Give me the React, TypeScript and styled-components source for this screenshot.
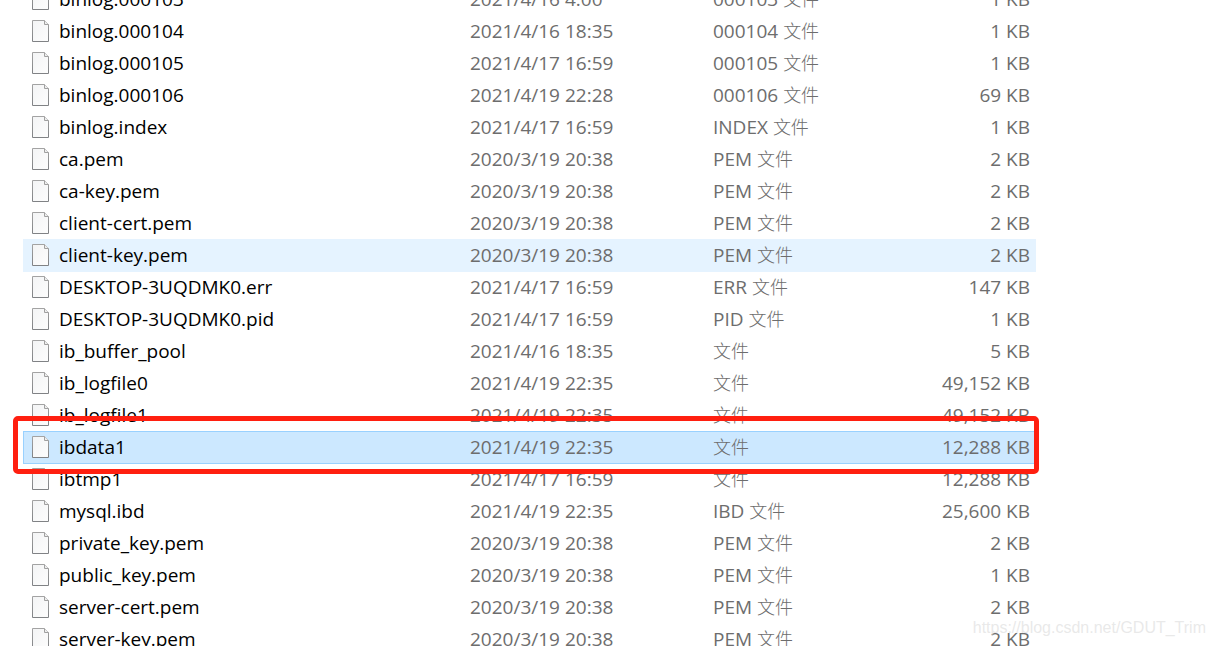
import React from "react";
import styled, { createGlobalStyle, css } from "styled-components";

type RowState = "normal" | "hover" | "selected";

interface FileEntry {
  name: string;
  modified: string;
  ext?: string;
  size: string;
  state?: RowState;
}

const files: FileEntry[] = [
  { name: "binlog.000103", modified: "2021/4/16 4:00", ext: "000103", size: "1 KB" },
  { name: "binlog.000104", modified: "2021/4/16 18:35", ext: "000104", size: "1 KB" },
  { name: "binlog.000105", modified: "2021/4/17 16:59", ext: "000105", size: "1 KB" },
  { name: "binlog.000106", modified: "2021/4/19 22:28", ext: "000106", size: "69 KB" },
  { name: "binlog.index", modified: "2021/4/17 16:59", ext: "INDEX", size: "1 KB" },
  { name: "ca.pem", modified: "2020/3/19 20:38", ext: "PEM", size: "2 KB" },
  { name: "ca-key.pem", modified: "2020/3/19 20:38", ext: "PEM", size: "2 KB" },
  { name: "client-cert.pem", modified: "2020/3/19 20:38", ext: "PEM", size: "2 KB" },
  { name: "client-key.pem", modified: "2020/3/19 20:38", ext: "PEM", size: "2 KB", state: "hover" },
  { name: "DESKTOP-3UQDMK0.err", modified: "2021/4/17 16:59", ext: "ERR", size: "147 KB" },
  { name: "DESKTOP-3UQDMK0.pid", modified: "2021/4/17 16:59", ext: "PID", size: "1 KB" },
  { name: "ib_buffer_pool", modified: "2021/4/16 18:35", size: "5 KB" },
  { name: "ib_logfile0", modified: "2021/4/19 22:35", size: "49,152 KB" },
  { name: "ib_logfile1", modified: "2021/4/19 22:35", size: "49,152 KB" },
  { name: "ibdata1", modified: "2021/4/19 22:35", size: "12,288 KB", state: "selected" },
  { name: "ibtmp1", modified: "2021/4/17 16:59", size: "12,288 KB" },
  { name: "mysql.ibd", modified: "2021/4/19 22:35", ext: "IBD", size: "25,600 KB" },
  { name: "private_key.pem", modified: "2020/3/19 20:38", ext: "PEM", size: "2 KB" },
  { name: "public_key.pem", modified: "2020/3/19 20:38", ext: "PEM", size: "1 KB" },
  { name: "server-cert.pem", modified: "2020/3/19 20:38", ext: "PEM", size: "2 KB" },
  { name: "server-key.pem", modified: "2020/3/19 20:38", ext: "PEM", size: "2 KB" },
];

const GlobalStyle = createGlobalStyle`
  body {
    margin: 0;
    background: #fff;
  }
`;

const Viewport = styled.main`
  position: relative;
  box-sizing: border-box;
  height: 100vh;
  overflow: hidden;
  padding: 0 179px 0 23px;
  background: #fff;
  font-family: "Open Sans", "Noto Sans CJK SC", sans-serif;
  font-size: 19px;
  line-height: 32px;
`;

/* The list is scrolled so that its first row is cut by the top edge. */
const FileTable = styled.table`
  width: 100%;
  margin-top: -17px;
  table-layout: fixed;
  border-collapse: collapse;
  color: #6d6d6d;
`;

const NameCol = styled.col``;
const DateCol = styled.col`
  width: 243px;
`;
const TypeCol = styled.col`
  width: 183px;
`;
const SizeCol = styled.col`
  width: 140px;
`;

const Row = styled.tr<{ $state: RowState }>`
  position: relative;
  height: 32px;
  ${({ $state }) =>
    $state === "hover" &&
    css`
      background: #e5f3ff;
      box-shadow: 0 1px 0 #e5f3ff;
    `}
  ${({ $state }) =>
    $state === "selected" &&
    css`
      z-index: 1;
      background: #cce8ff;
      box-shadow: inset 1px 1px 0 #99d1ff, inset -1px 0 0 #99d1ff, 0 1px 0 #99d1ff;
    `}
`;

const Cell = styled.td`
  height: 32px;
  padding: 0;
  white-space: nowrap;
`;

const NameCell = styled(Cell)`
  color: #000;
`;

const SizeCell = styled(Cell)`
  padding-right: 6px;
  text-align: right;
`;

const NameContent = styled.div`
  display: flex;
  align-items: center;
  gap: 9px;
  padding-left: 8px;
`;

const Hanzi = styled.span`
  font-size: 18px;
  font-weight: 300;
`;

const Highlight = styled.span`
  position: absolute;
  inset: -15px -3px -11px -10px;
  border: 5px solid #ff1f10;
  border-radius: 5px;
  pointer-events: none;
`;

const Watermark = styled.div`
  position: absolute;
  right: 9px;
  bottom: 8px;
  color: rgba(214, 214, 214, 0.55);
  font-family: "Liberation Sans", Arial, sans-serif;
  font-size: 16px;
  line-height: 20px;
`;

const FileIcon = () => (
  <svg width="19" height="24" viewBox="0 0 19 24" aria-hidden="true">
    <defs>
      <linearGradient id="sheet" x1="0" y1="0" x2="1" y2="1">
        <stop offset="0" stopColor="#f3f4f5" />
        <stop offset="1" stopColor="#fdfdfd" />
      </linearGradient>
      <linearGradient id="edge" x1="0" y1="0" x2="0" y2="1">
        <stop offset="0" stopColor="#a3a3a3" />
        <stop offset="1" stopColor="#808285" />
      </linearGradient>
    </defs>
    <path d="M1.5 1.5H13.5L17.5 5.5V22.5H1.5Z" fill="url(#sheet)" stroke="url(#edge)" />
    <path d="M13.5 1.5V5.5H17.5" fill="#eeeeee" stroke="#a0a0a0" />
  </svg>
);

export default function App() {
  return (
    <Viewport>
      <GlobalStyle />
      <FileTable>
        <colgroup>
          <NameCol />
          <DateCol />
          <TypeCol />
          <SizeCol />
        </colgroup>
        <tbody>
          {files.map((file) => (
            <Row key={file.name} $state={file.state ?? "normal"}>
              <NameCell>
                <NameContent>
                  <FileIcon />
                  {file.name}
                </NameContent>
                {file.state === "selected" && <Highlight />}
              </NameCell>
              <Cell>{file.modified}</Cell>
              <Cell>
                {file.ext && `${file.ext} `}
                <Hanzi lang="zh-CN">文件</Hanzi>
              </Cell>
              <SizeCell>{file.size}</SizeCell>
            </Row>
          ))}
        </tbody>
      </FileTable>
      <Watermark>https://blog.csdn.net/GDUT_Trim</Watermark>
    </Viewport>
  );
}
